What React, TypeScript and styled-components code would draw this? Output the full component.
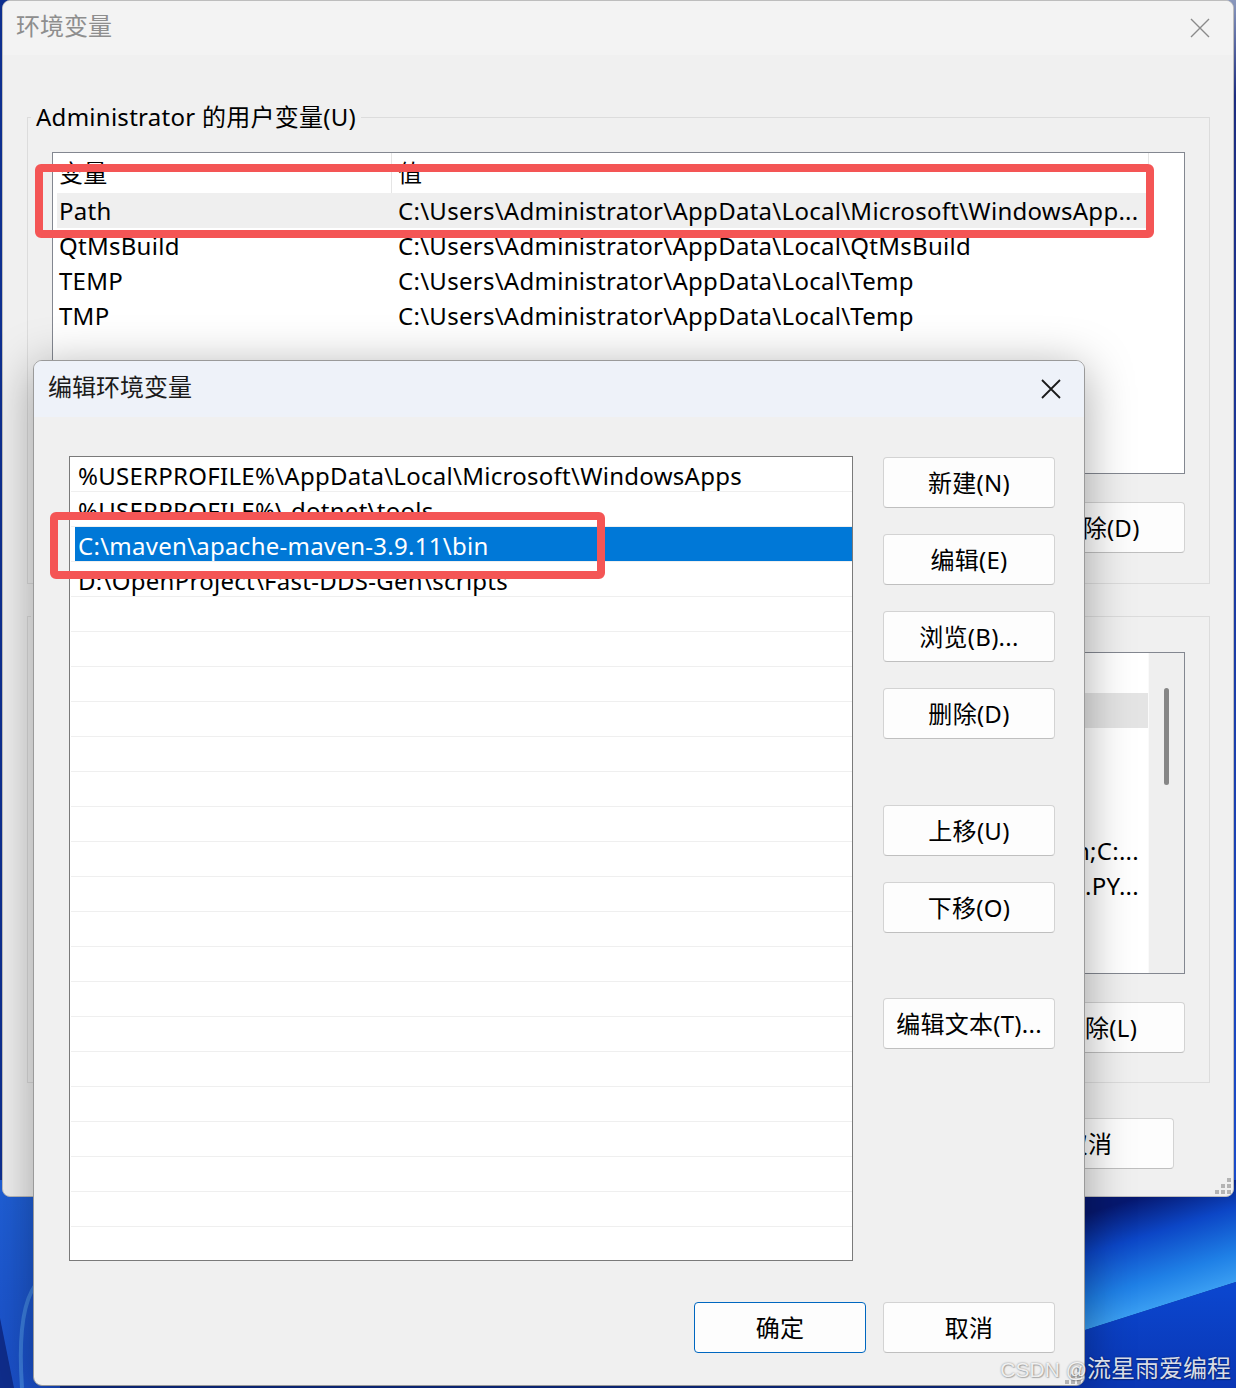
import React from "react";
import styled, { createGlobalStyle } from "styled-components";

const SANS = `"Noto Sans", "Noto Sans CJK SC", sans-serif`;

const GlobalStyle = createGlobalStyle`
  *, *::before, *::after { box-sizing: border-box; }
  html, body { margin: 0; padding: 0; }
  body { width: 1236px; height: 1388px; overflow: hidden; background: #0a3cc4; }
`;

const Desktop = styled.main`
  position: relative;
  width: 1236px;
  height: 1388px;
  overflow: hidden;
  font-family: ${SANS};
  font-size: 24px;
  letter-spacing: 0.27px;
  color: #000;
`;

const WallpaperArt = styled.svg`
  position: absolute;
  left: 0;
  top: 0;
  display: block;
`;

const WindowFrame = styled.section`
  position: absolute;
  display: flex;
  flex-direction: column;
  background: #f0f0f0;
  overflow: hidden;
`;

const MainWindow = styled(WindowFrame)`
  left: 2px;
  top: 0;
  width: 1232px;
  height: 1197px;
  border: 1px solid #bdbdbd;
  border-radius: 8px;
`;

const EditDialog = styled(WindowFrame)`
  left: 33px;
  top: 360px;
  width: 1052px;
  height: 1026px;
  border: 1px solid #9a9a9a;
  border-radius: 9px;
  box-shadow: 0 8px 48px rgba(0, 0, 0, 0.34);
`;

const TitleBar = styled.header<{ $active?: boolean }>`
  flex: none;
  height: ${(p) => (p.$active ? 56 : 54)}px;
  display: flex;
  align-items: center;
  justify-content: space-between;
  padding-left: ${(p) => (p.$active ? 14 : 13)}px;
  background: ${(p) => (p.$active ? "#eef2f9" : "#f3f3f3")};
`;

const TitleText = styled.h1<{ $active?: boolean }>`
  margin: 0 0 5px 0;
  font-size: 24px;
  line-height: 30px;
  font-weight: 400;
  letter-spacing: 0;
  color: ${(p) => (p.$active ? "#1b1b1b" : "#8e8e8e")};
`;

const CloseButton = styled.div`
  width: 46px;
  height: 100%;
  margin-right: 10px;
  display: flex;
  align-items: center;
  justify-content: center;
`;

const MainBody = styled.div`
  flex: 1;
  display: flex;
  flex-direction: column;
  padding: 46px 23px 0 24px;
`;

const Group = styled.fieldset<{ $gap?: number }>`
  margin: ${(p) => p.$gap ?? 0}px 0 0 0;
  padding: 0;
  min-width: 0;
  border: 1px solid #dcdcdc;
`;

const GroupLegend = styled.legend`
  margin-left: 3px;
  padding: 0 5px;
  line-height: 32px;
  font-size: 24px;
`;

const GroupContent = styled.div<{ $top: number; $bottom: number }>`
  padding: ${(p) => p.$top}px 24px ${(p) => p.$bottom}px 24px;
  display: flex;
  flex-direction: column;
`;

const VarList = styled.div`
  height: 322px;
  border: 1px solid #838790;
  background: #fff;
  display: flex;
  overflow: hidden;
`;

const VarListMain = styled.div`
  flex: 1;
  min-width: 0;
  display: flex;
  flex-direction: column;
  align-items: flex-start;
  overflow: hidden;
`;

const VarHeader = styled.div`
  flex: none;
  display: grid;
  grid-template-columns: 339px 757px;
  height: 40px;
`;

const HeaderCell = styled.div`
  padding-left: 6px;
  line-height: 40px;
  border-right: 1px solid #e5e5e5;
  white-space: nowrap;
  overflow: hidden;
`;

const VarRow = styled.div<{ $tone?: "hot" | "selected" }>`
  flex: none;
  display: grid;
  grid-template-columns: 335px 756px;
  height: 35px;
  line-height: 35px;
  margin-left: 4px;
  background: ${(p) =>
    p.$tone === "hot" ? "#efefef" : p.$tone === "selected" ? "#e4e4e4" : "transparent"};
`;

const NameCell = styled.div`
  padding-left: 2px;
  white-space: nowrap;
  overflow: hidden;
`;

const ValueCell = styled.div<{ $clipStart?: boolean }>`
  display: flex;
  justify-content: ${(p) => (p.$clipStart ? "flex-end" : "flex-start")};
  padding: 0 9px 0 6px;
  white-space: nowrap;
  overflow: hidden;
`;

const ScrollTrack = styled.div`
  flex: none;
  width: 36px;
  border-left: 1px solid #fafafa;
  background: #efefef;
`;

const ScrollThumb = styled.div`
  width: 5px;
  height: 97px;
  margin: 35px 0 0 15px;
  border-radius: 3px;
  background: #868686;
`;

const ButtonRow = styled.div<{ $top: number; $right?: number }>`
  display: flex;
  justify-content: flex-end;
  gap: 17px;
  margin-top: ${(p) => p.$top}px;
  padding-right: ${(p) => p.$right ?? 0}px;
`;

const Button = styled.div<{ $primary?: boolean; $gap?: number }>`
  flex: none;
  width: 172px;
  height: 51px;
  margin-top: ${(p) => p.$gap ?? 0}px;
  padding-bottom: 2px;
  display: flex;
  align-items: center;
  justify-content: center;
  background: #fdfdfd;
  border: 1px solid ${(p) => (p.$primary ? "#0067c0" : "#d3d3d3")};
  border-bottom-color: ${(p) => (p.$primary ? "#0067c0" : "#bfbfbf")};
  border-radius: 4px;
  white-space: nowrap;
  color: #000;
`;

const EditBody = styled.div`
  flex: 1;
  display: grid;
  grid-template-columns: 784px 172px;
  grid-template-rows: 805px auto;
  column-gap: 30px;
  align-content: start;
  padding: 39px 29px 0 35px;
`;

const PathList = styled.div`
  border: 1px solid #7a7a7a;
  background: #fff;
  overflow: hidden;
`;

const PathRow = styled.div`
  height: 35px;
  margin-left: 1px;
  padding-left: 4px;
  border-bottom: 1px solid #efefef;
  display: flex;
`;

const PathLabel = styled.div<{ $selected?: boolean }>`
  flex: 1;
  height: 34px;
  padding-left: 3px;
  line-height: 38px;
  white-space: nowrap;
  overflow: hidden;
  background: ${(p) => (p.$selected ? "#0078d7" : "transparent")};
  color: ${(p) => (p.$selected ? "#fff" : "#000")};
`;

const ButtonColumn = styled.div`
  display: flex;
  flex-direction: column;
  gap: 26px;
  padding-top: 1px;
`;

const DialogFooter = styled.div`
  grid-column: 1 / -1;
  display: flex;
  justify-content: flex-end;
  gap: 17px;
  margin-top: 41px;
`;

const Grip = styled.svg<{ $right: number; $bottom: number }>`
  position: absolute;
  right: ${(p) => p.$right}px;
  bottom: ${(p) => p.$bottom}px;
  display: block;
`;

const Annotation = styled.div<{ $x: number; $y: number; $w: number; $h: number }>`
  position: absolute;
  left: ${(p) => p.$x}px;
  top: ${(p) => p.$y}px;
  width: ${(p) => p.$w}px;
  height: ${(p) => p.$h}px;
  border: 8px solid #f45555;
  border-radius: 6px;
  pointer-events: none;
`;

const Watermark = styled.div`
  position: absolute;
  right: 5px;
  top: 1352px;
  line-height: 32px;
  font-size: 24px;
  letter-spacing: 0;
  color: rgba(255, 255, 255, 0.86);
  text-shadow: 0 0 2px rgba(0, 0, 0, 0.45), 1px 1px 1px rgba(0, 0, 0, 0.2);
  white-space: nowrap;
`;

const WatermarkLatin = styled.span`
  font-family: "Liberation Sans", sans-serif;
  font-size: 21px;
`;

const CloseIcon = ({ dark }: { dark?: boolean }) => (
  <svg width="20" height="20" viewBox="0 0 20 20" aria-hidden>
    <path
      d="M1 1 L19 19 M19 1 L1 19"
      stroke={dark ? "#1a1a1a" : "#8a8a8a"}
      strokeWidth={dark ? 1.8 : 1.4}
      fill="none"
    />
  </svg>
);

const GripDots = ({ right, bottom }: { right: number; bottom: number }) => (
  <Grip $right={right} $bottom={bottom} width="16" height="16" viewBox="0 0 16 16" aria-hidden>
    {[
      [12, 0],
      [6, 6],
      [12, 6],
      [0, 12],
      [6, 12],
      [12, 12],
    ].map(([x, y]) => (
      <rect key={`${x}-${y}`} x={x} y={y} width="4" height="4" fill="#b4b4b4" />
    ))}
  </Grip>
);

type Var = { name: string; value: string; tone?: "hot" | "selected"; clipStart?: boolean };

const userVars: Var[] = [
  { name: "Path", value: "C:\\Users\\Administrator\\AppData\\Local\\Microsoft\\WindowsApp...", tone: "hot" },
  { name: "QtMsBuild", value: "C:\\Users\\Administrator\\AppData\\Local\\QtMsBuild" },
  { name: "TEMP", value: "C:\\Users\\Administrator\\AppData\\Local\\Temp" },
  { name: "TMP", value: "C:\\Users\\Administrator\\AppData\\Local\\Temp" },
];

const systemVars: Var[] = [
  { name: "ComSpec", value: "C:\\Windows\\system32\\cmd.exe", tone: "selected" },
  { name: "DriverData", value: "C:\\Windows\\System32\\Drivers\\DriverData" },
  { name: "NUMBER_OF_PROCESSORS", value: "16" },
  { name: "OS", value: "Windows_NT" },
  {
    name: "Path",
    value: "C:\\Windows\\system32;C:\\Windows;C:\\Windows\\System32\\Wbem;C:\\Program Files\\Git\\bin;C:...",
    clipStart: true,
  },
  { name: "PATHEXT", value: ".COM;.EXE;.BAT;.CMD;.VBS;.VBE;.JS;.JSE;.WSF;.WSH;.MSC;.PY...", clipStart: true },
  { name: "PROCESSOR_ARCHITECTURE", value: "AMD64" },
  { name: "PROCESSOR_IDENTIFIER", value: "Intel64 Family 6 Model 154, GenuineIntel" },
];

const pathEntries = [
  "%USERPROFILE%\\AppData\\Local\\Microsoft\\WindowsApps",
  "%USERPROFILE%\\.dotnet\\tools",
  "C:\\maven\\apache-maven-3.9.11\\bin",
  "D:\\OpenProject\\Fast-DDS-Gen\\scripts",
];
const SELECTED_PATH = 2;
const PATH_ROWS = 23;

const VariableTable = ({ rows, scroll }: { rows: Var[]; scroll?: boolean }) => (
  <VarList>
    <VarListMain>
      <VarHeader>
        <HeaderCell>变量</HeaderCell>
        <HeaderCell>值</HeaderCell>
      </VarHeader>
      {rows.map((r) => (
        <VarRow key={r.name} $tone={r.tone}>
          <NameCell>{r.name}</NameCell>
          <ValueCell $clipStart={r.clipStart}>{r.value}</ValueCell>
        </VarRow>
      ))}
    </VarListMain>
    {scroll && (
      <ScrollTrack>
        <ScrollThumb />
      </ScrollTrack>
    )}
  </VarList>
);

const Wallpaper = () => (
  <WallpaperArt width="1236" height="1388" viewBox="0 0 1236 1388" aria-hidden>
    <defs>
      <linearGradient id="wpSky" x1="1127" y1="1201" x2="1160" y2="1306" gradientUnits="userSpaceOnUse">
        <stop offset="0" stopColor="#061870" />
        <stop offset="0.35" stopColor="#0c46c6" />
        <stop offset="0.75" stopColor="#1f80e6" />
        <stop offset="1" stopColor="#3a9ef2" />
      </linearGradient>
      <linearGradient id="wpDeep" x1="0" y1="1290" x2="0" y2="1388" gradientUnits="userSpaceOnUse">
        <stop offset="0" stopColor="#0b46ce" />
        <stop offset="1" stopColor="#0a36b4" />
      </linearGradient>
      <linearGradient id="wpLeft" x1="0" y1="1190" x2="30" y2="1388" gradientUnits="userSpaceOnUse">
        <stop offset="0" stopColor="#1f5fd6" />
        <stop offset="1" stopColor="#1a4fc8" />
      </linearGradient>
      <linearGradient id="wpEdge" x1="0" y1="0" x2="0" y2="1200" gradientUnits="userSpaceOnUse">
        <stop offset="0" stopColor="#8a98bc" />
        <stop offset="0.08" stopColor="#1c2c80" />
        <stop offset="1" stopColor="#1a4ccc" />
      </linearGradient>
    </defs>
    <rect width="1236" height="1388" fill="#0e2f8f" />
    <rect x="1200" y="0" width="36" height="1200" fill="url(#wpEdge)" />
    <polygon points="1060,1180 1236,1180 1236,1282 1060,1338" fill="url(#wpSky)" />
    <polygon points="1060,1338 1236,1282 1236,1388 1060,1388" fill="url(#wpDeep)" />
    <rect x="0" y="1180" width="60" height="208" fill="url(#wpLeft)" />
    <path d="M40 1280 Q16 1302 22 1388" stroke="#5aa6ee" strokeOpacity="0.5" strokeWidth="4" fill="none" />
    <polygon points="0,1318 14,1388 0,1388" fill="#0f2d8c" />
  </WallpaperArt>
);

export default function App() {
  return (
    <Desktop>
      <GlobalStyle />
      <Wallpaper />

      <MainWindow>
        <TitleBar>
          <TitleText>环境变量</TitleText>
          <CloseButton>
            <CloseIcon />
          </CloseButton>
        </TitleBar>
        <MainBody>
          <Group>
            <GroupLegend>Administrator 的用户变量(U)</GroupLegend>
            <GroupContent $top={19} $bottom={30}>
              <VariableTable rows={userVars} />
              <ButtonRow $top={28}>
                <Button>新建(N)...</Button>
                <Button>编辑(E)...</Button>
                <Button>删除(D)</Button>
              </ButtonRow>
            </GroupContent>
          </Group>
          <Group $gap={16}>
            <GroupLegend>系统变量(S)</GroupLegend>
            <GroupContent $top={20} $bottom={29}>
              <VariableTable rows={systemVars} scroll />
              <ButtonRow $top={28}>
                <Button>新建(W)...</Button>
                <Button>编辑(I)...</Button>
                <Button>删除(L)</Button>
              </ButtonRow>
            </GroupContent>
          </Group>
          <ButtonRow $top={35} $right={36}>
            <Button>确定</Button>
            <Button>取消</Button>
          </ButtonRow>
        </MainBody>
        <GripDots right={2} bottom={2} />
      </MainWindow>

      <EditDialog>
        <TitleBar $active>
          <TitleText $active>编辑环境变量</TitleText>
          <CloseButton>
            <CloseIcon dark />
          </CloseButton>
        </TitleBar>
        <EditBody>
          <PathList>
            {Array.from({ length: PATH_ROWS }, (_, i) => (
              <PathRow key={i}>
                <PathLabel $selected={i === SELECTED_PATH}>{pathEntries[i] ?? ""}</PathLabel>
              </PathRow>
            ))}
          </PathList>
          <ButtonColumn>
            <Button>新建(N)</Button>
            <Button>编辑(E)</Button>
            <Button>浏览(B)...</Button>
            <Button>删除(D)</Button>
            <Button $gap={40}>上移(U)</Button>
            <Button>下移(O)</Button>
            <Button $gap={39}>编辑文本(T)...</Button>
          </ButtonColumn>
          <DialogFooter>
            <Button $primary>确定</Button>
            <Button>取消</Button>
          </DialogFooter>
        </EditBody>
        <GripDots right={3} bottom={1} />
      </EditDialog>

      <Annotation $x={35} $y={164} $w={1119} $h={74} />
      <Annotation $x={50} $y={512} $w={555} $h={67} />

      <Watermark>
        <WatermarkLatin>CSDN @</WatermarkLatin>流星雨爱编程
      </Watermark>
    </Desktop>
  );
}
